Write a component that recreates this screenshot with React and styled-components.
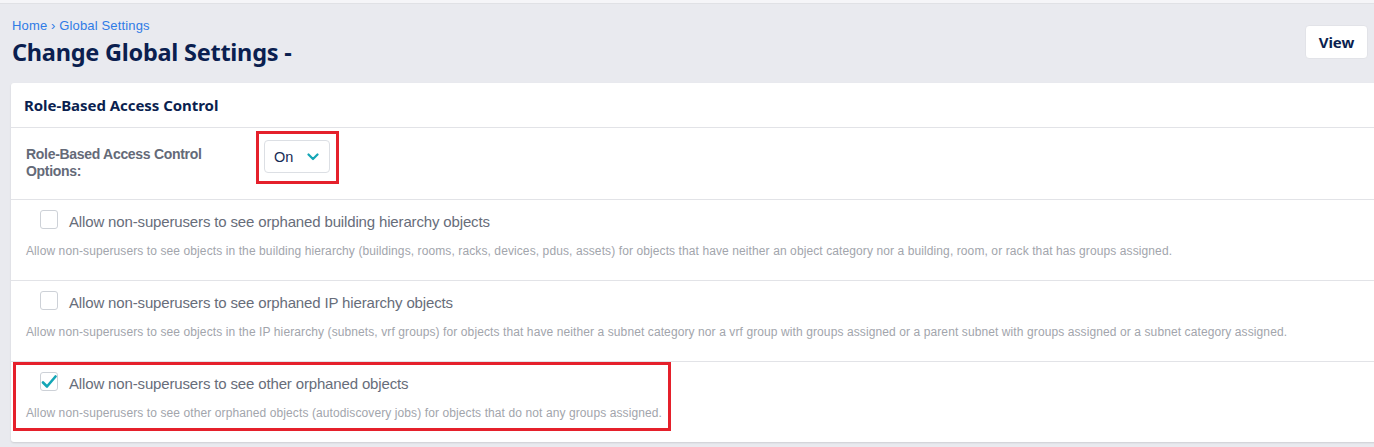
import styled, { createGlobalStyle } from "styled-components";

const GlobalStyle = createGlobalStyle`
  html, body {
    margin: 0;
    padding: 0;
    background: #e9eaef;
    overflow: hidden;
  }
  body {
    font-family: "Liberation Sans", Arial, sans-serif;
    border-top: 3px solid #f5f5f8;
    box-shadow: inset 0 1px 0 #e0e1e5;
  }
`;

const Page = styled.div`
  width: 1385px;
  padding: 0 0 6px 11px;
`;

const TopBar = styled.div`
  display: flex;
  justify-content: space-between;
  align-items: flex-start;
  padding: 15px 28px 0 1px;
  height: 65px;
`;

const Crumbs = styled.div`
  font-size: 13px;
  color: #2f7be6;
  line-height: 16px;
  letter-spacing: 0.15px;
`;

const Title = styled.h1`
  margin: 4px 0 0;
  font-family: "Noto Sans", sans-serif;
  font-weight: 700;
  font-size: 23.5px;
  line-height: 28px;
  letter-spacing: -0.25px;
  color: #0b1f50;
`;

const ViewButton = styled.button`
  margin-top: 7px;
  width: 63px;
  height: 34px;
  background: #fff;
  border: 1px solid #e2e3e8;
  border-radius: 4px;
  font-family: "Noto Sans", sans-serif;
  font-weight: 700;
  font-size: 15px;
  color: #0b1f50;
`;

const Card = styled.div`
  background: #fff;
  border-radius: 3px;
  box-shadow: 0 1px 2px rgba(0, 0, 0, 0.12);
`;

const CardHeader = styled.div`
  height: 44px;
  display: flex;
  align-items: center;
  padding: 0 13px;
  border-bottom: 1px solid #e2e3e7;
  font-family: "Noto Sans", sans-serif;
  font-weight: 700;
  font-size: 15px;
  letter-spacing: -0.05px;
  color: #0b1f50;
`;

const OptionRow = styled.div`
  display: flex;
  align-items: flex-start;
  height: 72px;
  box-sizing: border-box;
  padding: 3px 0 0 15px;
  border-bottom: 1px solid #e2e3e7;
`;

const OptionLabel = styled.div`
  width: 230px;
  margin-top: 15px;
  font-size: 14px;
  line-height: 17px;
  font-weight: 700;
  letter-spacing: -0.3px;
  color: #646a78;
`;

const Highlight = styled.div`
  display: inline-block;
  border: 3px solid ${(p) => (p.$on ? "#e5202b" : "transparent")};
  padding: ${(p) => p.$pad};
`;

const Select = styled.div`
  display: flex;
  align-items: center;
  gap: 14px;
  width: 66px;
  height: 33px;
  box-sizing: border-box;
  padding: 0 9px 0 9px;
  border: 1px solid #dcdfe4;
  border-radius: 4px;
  font-size: 14.5px;
  color: #172a55;
`;

const SettingRow = styled.div`
  height: ${(p) => (p.$last ? "80px" : "81px")};
  box-sizing: border-box;
  padding-left: 2px;
  border-bottom: ${(p) => (p.$last ? "none" : "1px solid #e2e3e7")};
`;

const CheckLine = styled.label`
  display: flex;
  align-items: center;
  gap: 11px;
  margin-left: 14px;
  height: 19px;
  font-size: 15px;
  letter-spacing: -0.15px;
  color: #676d7a;

  & > span:last-child {
    padding-top: 3px;
  }
`;

const Box = styled.span`
  width: 18px;
  height: 19px;
  box-sizing: border-box;
  border: 1.5px solid #cdd1d7;
  border-radius: 3px;
  display: flex;
  align-items: center;
  justify-content: center;
`;

const Desc = styled.div`
  margin-top: 15px;
  font-size: 12px;
  line-height: 14px;
  letter-spacing: 0.1px;
  color: #a2a5ac;
`;

const Chevron = () => (
  <svg width="12" height="8" viewBox="0 0 12 8">
    <path d="M1.5 1.5 L6 6 L10.5 1.5" fill="none" stroke="#14a6b6" strokeWidth="2.2" strokeLinecap="round" strokeLinejoin="round" />
  </svg>
);

const Check = () => (
  <svg width="16" height="14" viewBox="0 0 16 14">
    <path d="M2 7.5 L6 11.5 L14.5 1.5" fill="none" stroke="#14a6b6" strokeWidth="2.6" strokeLinecap="round" strokeLinejoin="round" />
  </svg>
);

const settings = [
  {
    label: "Allow non-superusers to see orphaned building hierarchy objects",
    desc: "Allow non-superusers to see objects in the building hierarchy (buildings, rooms, racks, devices, pdus, assets) for objects that have neither an object category nor a building, room, or rack that has groups assigned.",
    checked: false,
  },
  {
    label: "Allow non-superusers to see orphaned IP hierarchy objects",
    desc: "Allow non-superusers to see objects in the IP hierarchy (subnets, vrf groups) for objects that have neither a subnet category nor a vrf group with groups assigned or a parent subnet with groups assigned or a subnet category assigned.",
    checked: false,
  },
  {
    label: "Allow non-superusers to see other orphaned objects",
    desc: "Allow non-superusers to see other orphaned objects (autodiscovery jobs) for objects that do not any groups assigned.",
    checked: true,
  },
];

const App = function () {
  return (
    <>
      <GlobalStyle />
      <Page>
        <TopBar>
          <div>
            <Crumbs>Home › Global Settings</Crumbs>
            <Title>Change Global Settings -</Title>
          </div>
          <ViewButton>View</ViewButton>
        </TopBar>

        <Card>
          <CardHeader>Role-Based Access Control</CardHeader>
          <OptionRow>
            <OptionLabel>Role-Based Access Control Options:</OptionLabel>
            <Highlight $on $pad="6px 6px 8px 5px">
              <Select>
                <span>On</span>
                <Chevron />
              </Select>
            </Highlight>
          </OptionRow>

          {settings.map((s, i) => (
            <SettingRow key={s.label} $last={i === settings.length - 1}>
              <Highlight $on={s.checked} $pad="7px 6px 8px 10px">
                <CheckLine>
                  <Box>{s.checked && <Check />}</Box>
                  <span>{s.label}</span>
                </CheckLine>
                <Desc>{s.desc}</Desc>
              </Highlight>
            </SettingRow>
          ))}
        </Card>
      </Page>
    </>
  );
};

export default App;
